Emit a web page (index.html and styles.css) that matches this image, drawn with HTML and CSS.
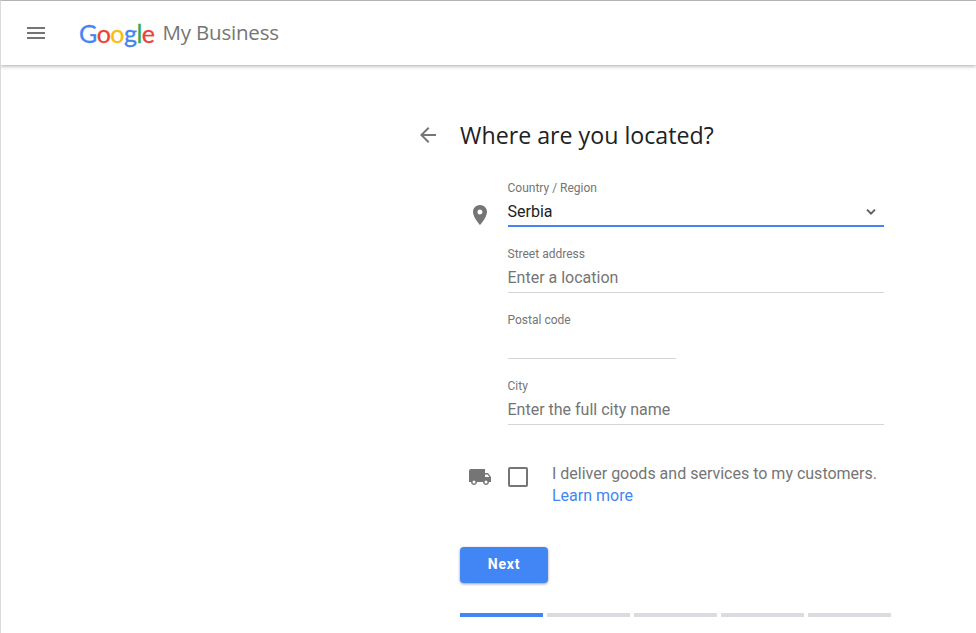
FILE: index.html
```html
<!DOCTYPE html>
<html lang="en">
<head>
<meta charset="utf-8">
<title>Google My Business</title>
<link rel="stylesheet" href="styles.css">
</head>
<body>
<header class="topbar">
  <svg class="menu" width="24" height="24" viewBox="0 0 24 24"><path d="M3 18h18v-2H3v2zm0-5h18v-2H3v2zm0-7v2h18V6H3z" fill="#757575"/></svg>
  <div class="logo"><span class="b">G</span><span class="r">o</span><span class="y">o</span><span class="b">g</span><span class="g">l</span><span class="r">e</span></div>
  <div class="product">My Business</div>
</header>
<main class="page">
  <div class="title-row">
    <svg class="back" width="24" height="24" viewBox="0 0 24 24"><path d="M20 11H7.83l5.59-5.59L12 4l-8 8 8 8 1.41-1.41L7.83 13H20v-2z" fill="#757575"/></svg>
    <h1>Where are you located?</h1>
  </div>
  <form class="form">
    <div class="row">
      <div class="side"><svg width="24" height="24" viewBox="0 0 24 24"><path d="M12 2C8.13 2 5 5.13 5 9c0 5.25 7 13 7 13s7-7.75 7-13c0-3.87-3.13-7-7-7zm0 9.5a2.5 2.5 0 1 1 0-5 2.5 2.5 0 0 1 0 5z" fill="#757575"/></svg></div>
      <div class="field active">
        <div class="label">Country / Region</div>
        <div class="value dark">Serbia
          <svg class="caret" width="12" height="12" viewBox="0 0 12 12"><path d="M2 3.6 6 7.6l4-4" fill="none" stroke="#616161" stroke-width="2"/></svg>
        </div>
      </div>
    </div>
    <div class="row">
      <div class="side"></div>
      <div class="field"><div class="label">Street address</div><div class="value">Enter a location</div></div>
    </div>
    <div class="row">
      <div class="side"></div>
      <div class="field short"><div class="label">Postal code</div><div class="value"></div></div>
    </div>
    <div class="row">
      <div class="side"></div>
      <div class="field"><div class="label">City</div><div class="value">Enter the full city name</div></div>
    </div>
    <div class="deliver">
      <div class="side truck"><svg width="24" height="24" viewBox="0 0 24 24"><path d="M20 8h-3V4H3c-1.1 0-2 .9-2 2v11h2c0 1.66 1.34 3 3 3s3-1.34 3-3h6c0 1.66 1.34 3 3 3s3-1.34 3-3h2v-5l-3-4zM6 18.500a1.500 1.500 0 1 1 0-3 1.500 1.500 0 0 1 0 3zm13.500-9 1.960 2.500H17V9.500h2.500zM18 18.500a1.500 1.500 0 1 1 0-3 1.500 1.500 0 0 1 0 3z" fill="#757575"/></svg></div>
      <div class="checkbox"></div>
      <div class="deliver-text">I deliver goods and services to my customers.<br><a href="#">Learn more</a></div>
    </div>
    <button class="next" type="button">Next</button>
    <div class="progress">
      <span class="step on"></span><span class="step"></span><span class="step"></span><span class="step"></span><span class="step"></span>
    </div>
  </form>
</main>
</body>
</html>
```
FILE: styles.css
```css
* { box-sizing: border-box; }
html, body { margin: 0; height: 100%; overflow: hidden; }
body {
  background: #fff;
  font-family: Roboto, "Liberation Sans", sans-serif;
  color: #757575;
  border-top: 1px solid #b5b5b5;
  border-left: 1px solid #dadada;
}
.topbar {
  height: 64px;
  margin-left: -1px;
  background: #fff;
  display: flex;
  align-items: center;
  padding: 0 0 0 24px;
  box-shadow: 0 1px 4px rgba(0,0,0,.35);
  position: relative;
}
.menu { margin-right: 31px; }
.logo {
  font-family: Lato, sans-serif;
  font-size: 25px;
  letter-spacing: -0.5px;
  font-weight: 400;
  line-height: 32px;
  margin-right: 8px;
  -webkit-text-stroke: 0.3px;
}
.b { color: #4285f4; }
.r { color: #ea4335; }
.y { color: #fbbc05; }
.g { color: #34a853; }
.product {
  font-family: "Open Sans", sans-serif;
  font-size: 20.5px;
  line-height: 32px;
  color: #757575;
  letter-spacing: -0.2px;
  margin-top: -2px;
}
.page { padding: 0 0 0 415px; }
.title-row {
  display: flex;
  align-items: center;
  height: 36px;
  margin-top: 52px;
}
.back { margin-right: 20px; }
h1 {
  margin: -1px 0 0;
  font-family: "Open Sans", sans-serif;
  font-size: 23.2px;
  font-weight: 400;
  color: #202124;
  white-space: nowrap;
}
.form { margin: 0 0 0 44px; width: 432px; padding-top: 27px; }
.row { display: flex; height: 66px; }
.side { width: 48px; flex: none; display: flex; padding: 23px 0 0 8px; }
.field { width: 376px; }
.field.short { width: 168px; }
.label { font-size: 12px; line-height: 16px; height: 16px; color: #757575; text-indent: -0.5px; }
.value {
  height: 31px;
  padding-top: 5px;
  font-size: 16px;
  line-height: 22px;
  border-bottom: 1px solid #d5d5d5;
  position: relative;
  text-indent: -0.5px;
}
.dark { color: #202124; }
.active .value { border-bottom: 2px solid #4285f4; }
.caret { position: absolute; right: 7px; top: 10px; }
.deliver { display: flex; margin-top: 19px; }
.deliver .side { padding: 0 0 0 8px; margin-top: 2px; }
.checkbox {
  width: 20px; height: 20px; flex: none;
  margin-top: 4px;
  border: 2px solid #757575;
  border-radius: 2px;
  margin-right: 24px;
}
.deliver-text { font-size: 16px; line-height: 22px; white-space: nowrap; }
a { color: #4285f4; text-decoration: none; }
.next {
  display: block;
  width: 88px; height: 36px;
  margin: 40px 0 0 0;
  border: 0;
  border-radius: 4px;
  background: #4285f4;
  color: #fff;
  font: 700 14px Roboto, sans-serif;
  letter-spacing: .8px;
  padding: 0 0 2px;
  box-shadow: 0 1px 3px rgba(0,0,0,.4);
}
.progress { display: flex; gap: 4px; margin-top: 30px; }
.step { width: 83px; height: 4px; background: #dadce0; flex: none; }
.step.on { background: #4285f4; }
```
